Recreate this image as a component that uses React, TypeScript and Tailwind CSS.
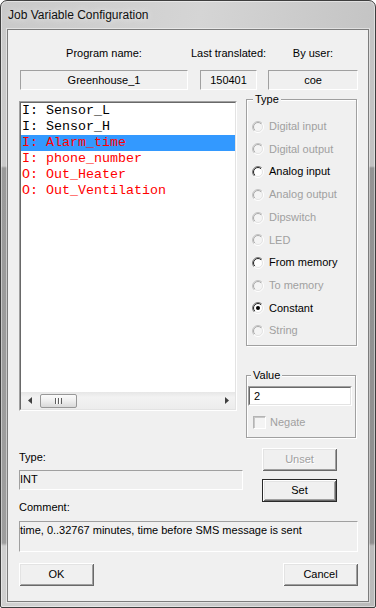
import React from "react";

function Radio({ enabled, checked, id }: { enabled: boolean; checked?: boolean; id: number }) {
  const outer = enabled ? "#7a7a7a" : "#c2c2c2";
  const inner = enabled ? "#1e1e1e" : "#a8a8a8";
  return (
    <svg width="12" height="12" viewBox="0 0 12 12" className="shrink-0">
      <defs>
        <linearGradient id={`ro${id}`} x1="0" y1="0" x2="1" y2="1">
          <stop offset="0.5" stopColor={outer} />
          <stop offset="0.5" stopColor="#ffffff" />
        </linearGradient>
        <linearGradient id={`ri${id}`} x1="0" y1="0" x2="1" y2="1">
          <stop offset="0.5" stopColor={inner} />
          <stop offset="0.5" stopColor="#e3e3e3" />
        </linearGradient>
      </defs>
      <circle cx="6" cy="6" r="5.5" fill="none" stroke={`url(#ro${id})`} />
      <circle cx="6" cy="6" r="4.5" fill={enabled ? "#ffffff" : "#f4f4f4"} stroke={`url(#ri${id})`} />
      {checked && <circle cx="6" cy="6" r="2" fill="#000000" />}
    </svg>
  );
}

const radios = [
  { label: "Digital input", enabled: false, h: "h-[23px]" },
  { label: "Digital output", enabled: false, h: "h-[22px]" },
  { label: "Analog input", enabled: true, h: "h-[23px]" },
  { label: "Analog output", enabled: false, h: "h-[23px]" },
  { label: "Dipswitch", enabled: false, h: "h-[23px]" },
  { label: "LED", enabled: false, h: "h-[22px]" },
  { label: "From memory", enabled: true, h: "h-[23px]" },
  { label: "To memory", enabled: false, h: "h-[23px]" },
  { label: "Constant", enabled: true, h: "h-[22px]", checked: true },
  { label: "String", enabled: false, h: "h-[23px]" },
];

const items = [
  { t: "I: Sensor_L", red: false, sel: false },
  { t: "I: Sensor_H", red: false, sel: false },
  { t: "I: Alarm_time", red: true, sel: true },
  { t: "I: phone_number", red: true, sel: false },
  { t: "O: Out_Heater", red: true, sel: false },
  { t: "O: Out_Ventilation", red: true, sel: false },
];

const btn =
  "w-[75px] h-[23px] flex items-center justify-center bg-[#f0f0f0] shadow-[inset_1px_1px_0_#ffffff,inset_-1px_-1px_0_#696969,inset_2px_2px_0_#e3e3e3,inset_-2px_-2px_0_#a0a0a0]";

export default function App() {
  return (
    <div className="w-[376px] h-[608px] flex flex-col rounded-t-[7px] rounded-b-[2px] border border-[#3e3e3e] overflow-hidden bg-[linear-gradient(180deg,transparent_0,transparent_165px,rgba(0,0,0,0.24)_167px,rgba(0,0,0,0.24)_542px,transparent_545px),linear-gradient(100deg,#c9c9c9_0%,#d5d5d5_42%,#bababa_100%)] shadow-[inset_0_0_0_1px_rgba(255,255,255,0.45)] [font-family:'Liberation_Sans',Arial,sans-serif] text-[11px] leading-[13px] text-black">
      {/* Title bar */}
      <div className="h-[28px] shrink-0 pl-[7px] pt-[7px]">
        <div className="text-[12px] leading-[14px] text-[#101010] [text-shadow:0_0_7px_rgba(255,255,255,0.9)]">
          Job Variable Configuration
        </div>
      </div>

      {/* Client area */}
      <div className="mx-[6px] h-[573px] shrink-0 border border-[#7c7c7c] bg-[#f0f0f0] flex flex-col shadow-[0_0_0_1px_rgba(255,255,255,0.45)]">
        {/* Header labels */}
        <div className="mt-[17px] flex pl-[12px] h-[13px] whitespace-nowrap">
          <div className="w-[168px] text-center">Program name:</div>
          <div className="ml-[12px] w-[57px] flex justify-center">Last translated:</div>
          <div className="ml-[11px] w-[90px] text-center">By user:</div>
        </div>
        {/* Header boxes */}
        <div className="mt-[10px] flex pl-[12px] h-[20px]">
          <div className="w-[168px] h-[20px] border-t border-l border-t-[#a0a0a0] border-l-[#a0a0a0] border-b border-r border-b-white border-r-white flex items-center justify-center">
            Greenhouse_1
          </div>
          <div className="ml-[12px] w-[57px] h-[20px] border-t border-l border-t-[#a0a0a0] border-l-[#a0a0a0] border-b border-r border-b-white border-r-white flex items-center justify-center">
            150401
          </div>
          <div className="ml-[11px] w-[90px] h-[20px] border-t border-l border-t-[#a0a0a0] border-l-[#a0a0a0] border-b border-r border-b-white border-r-white flex items-center justify-center">
            coe
          </div>
        </div>

        {/* Main row */}
        <div className="mt-[2px] flex pl-[11px] items-start">
          {/* Left column */}
          <div className="w-[227px] flex flex-col">
            {/* Listbox */}
            <div className="mt-[9px] w-[218px] h-[310px] border border-t-[#a0a0a0] border-l-[#a0a0a0] border-r-white border-b-white">
              <div className="w-full h-full border border-t-[#696969] border-l-[#696969] border-r-[#e3e3e3] border-b-[#e3e3e3] bg-white flex flex-col">
                <div className="flex-1 [font-family:'Liberation_Mono','Courier_New',monospace] text-[13.33px] leading-[16px]">
                  {items.map((it) => (
                    <div
                      key={it.t}
                      className={`h-[16px] pl-[1px] whitespace-pre ${it.sel ? "bg-[#3399ff]" : ""} ${it.red ? "text-[#ff0000]" : "text-black"}`}
                    >
                      {it.t}
                    </div>
                  ))}
                </div>
                {/* Horizontal scrollbar */}
                <div className="h-[17px] flex bg-[linear-gradient(180deg,#e6e6e6_0%,#f2f2f2_30%,#ececec_100%)]">
                  <div className="w-[17px] flex items-center justify-center">
                    <svg width="4" height="7" viewBox="0 0 4 7">
                      <polygon points="4,0 0,3.5 4,7" fill="#404040" />
                    </svg>
                  </div>
                  <div className="flex-1 flex items-center pl-[2px]">
                    <div className="w-[37px] h-[14px] rounded-[2px] border border-[#989898] bg-[linear-gradient(180deg,#fbfbfb_0%,#eeeeee_50%,#d9d9d9_100%)] flex items-center justify-center">
                      <svg width="7" height="6" viewBox="0 0 7 6">
                        <rect x="0" y="0" width="1" height="6" fill="#5e5e5e" />
                        <rect x="1" y="0" width="1" height="6" fill="#ffffff" />
                        <rect x="3" y="0" width="1" height="6" fill="#5e5e5e" />
                        <rect x="4" y="0" width="1" height="6" fill="#ffffff" />
                        <rect x="6" y="0" width="1" height="6" fill="#5e5e5e" />
                      </svg>
                    </div>
                  </div>
                  <div className="w-[17px] flex items-center justify-center">
                    <svg width="4" height="7" viewBox="0 0 4 7">
                      <polygon points="0,0 4,3.5 0,7" fill="#404040" />
                    </svg>
                  </div>
                </div>
              </div>
            </div>

            <div className="mt-[40px] h-[13px]">Type:</div>
            <div className="mt-[6px] w-[224px] h-[20px] border-t border-l border-t-[#a0a0a0] border-l-[#a0a0a0] border-b border-r border-b-white border-r-white pt-[2px]">
              INT
            </div>
            <div className="mt-[11px] h-[13px]">Comment:</div>
          </div>

          {/* Right column */}
          <div className="w-[112px] flex flex-col">
            {/* Type group */}
            <div className="relative mt-[7px] h-[247px] w-[111px] border border-[#a0a0a0] shadow-[inset_1px_1px_0_#ffffff,1px_1px_0_#ffffff] pt-[15px] pl-[5px]">
              <div className="absolute -top-[7px] left-[6px] px-[2px] bg-[#f0f0f0] h-[13px]">Type</div>
              {radios.map((r, i) => (
                <div key={r.label} className={`${r.h} flex items-center gap-[5px]`}>
                  <Radio enabled={r.enabled} checked={r.checked} id={i} />
                  <span className={r.enabled ? "text-black" : "text-[#a0a0a0]"}>{r.label}</span>
                </div>
              ))}
            </div>

            {/* Value group */}
            <div className="relative mt-[29px] h-[63px] w-[110px] border border-[#a0a0a0] shadow-[inset_1px_1px_0_#ffffff,1px_1px_0_#ffffff] pt-[10px] pl-[1px]">
              <div className="absolute -top-[7px] left-[4px] px-[2px] bg-[#f0f0f0] h-[13px]">Value</div>
              <div className="w-[104px] h-[20px] border border-t-[#a0a0a0] border-l-[#a0a0a0] border-r-white border-b-white">
                <div className="w-full h-full border border-t-[#696969] border-l-[#696969] border-r-[#e3e3e3] border-b-[#e3e3e3] bg-white flex items-center pl-[4px]">
                  2
                </div>
              </div>
              <div className="mt-[10px] ml-[5px] flex items-center gap-[4px]">
                <div className="w-[13px] h-[13px] border border-t-[#b4b4b4] border-l-[#b4b4b4] border-r-white border-b-white bg-[#f4f4f4] shadow-[inset_1px_1px_0_#c8c8c8]" />
                <span className="text-[#a0a0a0]">Negate</span>
              </div>
            </div>

            <div className={`mt-[10px] ml-[16px] ${btn} text-[#a0a0a0] [text-shadow:1px_1px_0_#ffffff]`}>Unset</div>
            <div className="mt-[8px] ml-[16px] w-[75px] h-[23px] border border-[#2a2a2a] flex items-center justify-center bg-[#f0f0f0] shadow-[inset_1px_1px_0_#ffffff,inset_-1px_-1px_0_#696969,inset_2px_2px_0_#e3e3e3,inset_-2px_-2px_0_#a0a0a0]">
              Set
            </div>
          </div>
        </div>

        {/* Comment box */}
        <div className="mt-[7px] ml-[11px] w-[339px] h-[31px] border-t border-l border-t-[#a0a0a0] border-l-[#a0a0a0] border-b border-r border-b-white border-r-white pt-[2px] whitespace-nowrap">
          time, 0..32767 minutes, time before SMS message is sent
        </div>

        {/* OK / Cancel */}
        <div className="mt-[11px] ml-[11px] w-[339px] flex justify-between">
          <div className={btn}>OK</div>
          <div className={btn}>Cancel</div>
        </div>
      </div>
    </div>
  );
}
